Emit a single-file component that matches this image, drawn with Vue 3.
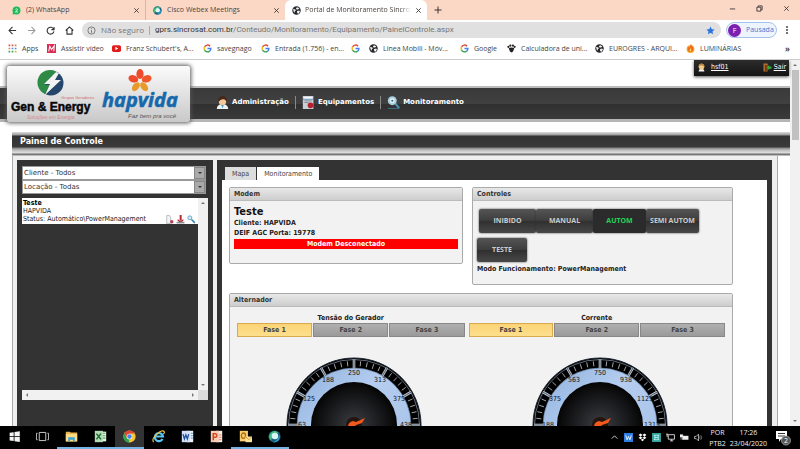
<script setup>
import { ref } from 'vue'

const browserTabs = [
  { title: '(2) WhatsApp', icon: 'i-whats', active: false },
  { title: 'Cisco Webex Meetings', icon: 'i-webex', active: false },
  { title: 'Portal de Monitoramento Sincros', icon: 'i-globe', active: true },
]

const bookmarks = [
  { title: 'Apps', icon: 'i-apps' },
  { title: 'Assistir vídeo', icon: 'i-m' },
  { title: "Franz Schubert's, A...", icon: 'i-yt' },
  { title: 'savegnago', icon: 'i-g' },
  { title: 'Entrada (1.756) - en...', icon: 'i-g' },
  { title: '', icon: 'i-g' },
  { title: 'Linea Mobili - Móv...', icon: 'i-globe' },
  { title: 'Google', icon: 'i-g' },
  { title: 'Calculadora de uni...', icon: 'i-paw' },
  { title: 'EUROGRES - ARQUI...', icon: 'i-globe' },
  { title: 'LUMINÁRIAS', icon: 'i-flame' },
]

const menu = [
  { title: 'Administração', icon: 'i-user' },
  { title: 'Equipamentos', icon: 'i-device' },
  { title: 'Monitoramento', icon: 'i-cam' },
]

const modes = ['INIBIDO', 'MANUAL', 'AUTOM', 'SEMI AUTOM', 'TESTE']
const mode = ref('AUTOM')

const gauges = ref([
  { title: 'Tensão do Gerador', labels: ['63', '125', '188', '250', '313', '375', '438'], phase: 1 },
  { title: 'Corrente', labels: ['188', '375', '563', '750', '938', '1125', '1313'], phase: 1 },
])

const apps = [
  { name: 'Iniciar', icon: 'i-win' },
  { name: 'Visão de tarefas', icon: 'i-task' },
  { name: 'Explorador', icon: 'i-folder', open: true },
  { name: 'Excel', icon: 'i-excel', open: true },
  { name: 'Chrome', icon: 'i-chrome', open: true, active: true },
  { name: 'Internet Explorer', icon: 'i-ie' },
  { name: 'Word', icon: 'i-word' },
  { name: 'PowerPoint', icon: 'i-ppt' },
  { name: 'Outlook', icon: 'i-outlook', open: true },
  { name: 'Webex', icon: 'i-webex', open: true },
]
const tray = ['i-up', 'i-tw', 'i-dropbox', 'i-teal', 'i-net', 'i-bat', 'i-vol']

function polar(angle, r) {
  const a = (angle * Math.PI) / 180
  return { x: 70 + r * Math.sin(a), y: 70 - r * Math.cos(a) }
}
const ticks = []
for (let i = -20; i <= 20; i++) {
  const major = i % 5 === 0
  const a = polar(i * 6, major ? 66 : 64)
  const b = polar(i * 6, major ? 57 : 59)
  ticks.push({ x1: a.x, y1: a.y, x2: b.x, y2: b.y, major })
}
</script>

<template>
  <div class="screen">
    <svg class="defs" aria-hidden="true">
      <defs>
        <linearGradient id="rim" x1="0" y1="0" x2="1" y2="1">
          <stop offset="0" stop-color="#8fb0dc" /><stop offset=".4" stop-color="#b4cdf0" /><stop offset="1" stop-color="#a5c0e6" />
        </linearGradient>
        <radialGradient id="dial" cx=".5" cy=".5" r=".5">
          <stop offset="0" stop-color="#3c3e42" /><stop offset=".45" stop-color="#232427" /><stop offset="1" stop-color="#050505" />
        </radialGradient>
        <symbol id="i-whats" viewBox="0 0 16 16"><circle cx="8" cy="8" r="7" fill="#1fba57" /><path d="M1 15l1-5 4 4z" fill="#1fba57" /><path d="M6 6q2-2 4 0 0 2-4 4.500h4.500" fill="none" stroke="#e6ffe9" stroke-width="1.500" /></symbol>
        <symbol id="i-webex" viewBox="0 0 16 16"><circle cx="8" cy="8" r="7.500" fill="#1d5d7c" /><path d="M2 11A7 7 0 0 1 13 3l-3 1Q5 6 4 13z" fill="#3fbf7b" /><circle cx="8.500" cy="7.500" r="4" fill="#d9f6f4" /><path d="M14 6a7 7 0 0 1-8 9q6-2 8-9z" fill="#28a8d8" /></symbol>
        <symbol id="i-globe" viewBox="0 0 16 16"><circle cx="8" cy="8" r="7.500" fill="#25272b" /><path d="M2 5l4 1 1 2-2 1v3L3 10zM9 2l4 2-2 2-3 0-1-2zM9 9l4-1 1 2-3 4-2-2z" fill="#f2f2f2" /></symbol>
        <symbol id="i-apps" viewBox="0 0 16 16"><path d="M1 1h3v3H1zM6.500 1h3v3h-3z" fill="#e25241" /><path d="M12 1h3v3h-3zM1 6.500h3v3H1z" fill="#d98a36" /><path d="M6.500 6.500h3v3h-3zM12 6.500h3v3h-3z" fill="#4c8fd8" /><path d="M1 12h3v3H1zM6.500 12h3v3h-3z" fill="#3aa757" /><path d="M12 12h3v3h-3z" fill="#e0b030" /></symbol>
        <symbol id="i-m" viewBox="0 0 16 16"><path d="M0 0h16v16H0z" fill="#dc2e55" /><path d="M3 13L5 4l3 6 5-7-1 10" fill="none" stroke="#fff" stroke-width="1.800" /></symbol>
        <symbol id="i-yt" viewBox="0 0 16 16"><rect y="2" width="16" height="12" rx="3" fill="#e21b1b" /><path d="M6 5l5 3-5 3z" fill="#fff" /></symbol>
        <symbol id="i-g" viewBox="0 0 16 16"><g fill="none" stroke-width="2.600"><path d="M12.500 3.800A6 6 0 0 0 2.800 5.200" stroke="#e24a3b" /><path d="M2.800 5.200a6 6 0 0 0 0 5.600" stroke="#f2b91c" /><path d="M2.800 10.800a6 6 0 0 0 9 1.900" stroke="#35a554" /><path d="M11.800 12.700A6 6 0 0 0 14 8H8" stroke="#4383ef" /></g></symbol>
        <symbol id="i-paw" viewBox="0 0 16 16"><path d="M3 7q5-2 10 0l-2 6q-3 4-6 0z" fill="#222" /><circle cx="2.500" cy="5" r="2" fill="#222" /><circle cx="6" cy="2.800" r="2" fill="#222" /><circle cx="10.500" cy="2.800" r="2" fill="#222" /><circle cx="13.500" cy="5" r="2" fill="#222" /></symbol>
        <symbol id="i-flame" viewBox="0 0 16 16"><circle cx="8" cy="9" r="7" fill="#f7a823" /><path d="M8 0q5 5 5 9a5 5 0 0 1-10 0q0-3 2-4l1 2q2-2 2-7z" fill="#ee6c1c" /><path d="M8 7q3 4 0 7-3-3 0-7z" fill="#ffe066" /></symbol>
        <symbol id="i-user" viewBox="0 0 16 16"><path d="M1 16q0-5 5-6h4q5 1 5 6z" fill="#eef2f5" /><path d="M6 10h4l-2 5z" fill="#4d9bc4" /><circle cx="8" cy="6.500" r="4.600" fill="#f7c799" /><path d="M3 8Q1 1 8 0q7 1 5 8-1-4-4-4-4 0-6 4z" fill="#45281a" /></symbol>
        <symbol id="i-gold" viewBox="0 0 16 16"><path d="M3 15q0-5 5-5t5 5z" fill="#f3f3f3" /><circle cx="8" cy="6.500" r="5" fill="#f0c987" /><path d="M2.500 7Q3 1 8 1t5.500 6Q11 4 8 4T2.500 7z" fill="#b98442" /></symbol>
        <symbol id="i-device" viewBox="0 0 16 16"><path d="M1 0h13v16H1z" fill="#c9cfd6" /><path d="M2 1h11v3H2z" fill="#f4f6f8" /><path d="M3 6h9M3 8h5" stroke="#78838e" /><path d="M1 4h13" stroke="#4a88b8" /><circle cx="10.500" cy="11.500" r="3.500" fill="#b7202c" /></symbol>
        <symbol id="i-cam" viewBox="0 0 16 16"><path d="M10 9l5 6" stroke="#4a94b0" stroke-width="2.500" /><path d="M1 15.300h14" stroke="#417d92" /><circle cx="6.500" cy="5.800" r="5.500" fill="#a7cfdf" /><circle cx="6.500" cy="5.800" r="3" fill="#e8f3f8" /><circle cx="6.500" cy="5.800" r="1.300" fill="#47616c" /></symbol>
        <symbol id="i-tool" viewBox="0 0 16 16"><path d="M6.500 0h3.500v10H6.500z" fill="#b3262e" /><path d="M3 7l5 4 5-4v3l-5 4-5-4z" fill="#b3262e" /><path d="M1 12h14v3H1z" fill="#8a8f96" /></symbol>
        <symbol id="i-page" viewBox="0 0 16 16"><path d="M3 1h5l2 3v11H3z" fill="#f5f5f5" stroke="#8d939a" /><circle cx="12" cy="12" r="3" fill="#b7404a" /></symbol>
        <symbol id="i-find" viewBox="0 0 16 16"><circle cx="5" cy="5" r="3.500" fill="#d9ebf5" stroke="#5a9cc4" stroke-width="1.500" /><path d="M8 8l6 6" stroke="#2f7fb5" stroke-width="2.600" /></symbol>
        <symbol id="i-exit" viewBox="0 0 16 16"><path d="M1 1h7v14H1z" fill="#c8813c" /><path d="M3 2l4 2v11l-4-1z" fill="#6f3d15" /><path d="M15 6H11V3L7 8l4 5v-3h4z" fill="#35ad3c" /></symbol>
        <symbol id="i-win" viewBox="0 0 16 16"><path d="M2 3.500l5-.8v5H2zM8 2.500l6.500-1v6.200H8zM2 8.600h5v5l-5-.8zM8 8.600h6.500v6.200L8 13.800z" fill="#f4f4f4" /></symbol>
        <symbol id="i-task" viewBox="0 0 16 16"><path d="M4 3h8v10H4zM2 4H.5v8H2M14 4h1.500v8H14" fill="none" stroke="#c8c8c8" stroke-width="1.200" /></symbol>
        <symbol id="i-folder" viewBox="0 0 16 16"><path d="M1 2h5l1 1h8v11H1z" fill="#e8b64b" /><path d="M1 5h14v9H1z" fill="#fbdc83" /><path d="M4 9h8v5H10v-2H6v2H4z" fill="#36a3dc" /></symbol>
        <symbol id="i-excel" viewBox="0 0 16 16"><path d="M7 2h8v12H7z" fill="#e7f3e7" /><path d="M11 4h3M11 7h3M11 10h3" stroke="#4ca25a" stroke-width="1.300" /><path d="M1 1h10v14H1z" fill="#b4dcb2" /><path d="M3 4.500l5.500 7M8.500 4.500l-5.500 7" stroke="#176a32" stroke-width="1.800" /></symbol>
        <symbol id="i-word" viewBox="0 0 16 16"><path d="M7 1h8v14H7z" fill="#f0f4fb" /><path d="M12 4h2.500M12 7h2.500M12 10h2.500" stroke="#5a84c8" stroke-width="1.200" /><path d="M1 1h10v14H1z" fill="#d2e1f7" /><path d="M2.500 5l1.700 6L6 6l1.800 5 1.700-6" fill="none" stroke="#1c4ea0" stroke-width="1.600" /></symbol>
        <symbol id="i-ppt" viewBox="0 0 16 16"><path d="M7 1h8v14H7z" fill="#fdf0ea" /><path d="M11 6h3M11 9h3M11 12h3" stroke="#e0774c" stroke-width="1.200" /><path d="M1 1h10v14H1z" fill="#f9cdb8" /><path d="M4 12.500V4.500h2.500q2 .3 2 2.200t-2 2.200H4" fill="none" stroke="#d2461a" stroke-width="1.800" /></symbol>
        <symbol id="i-outlook" viewBox="0 0 16 16"><path d="M1 1h10v13H1z" fill="#f8cf72" /><ellipse cx="5.500" cy="7" rx="2.500" ry="3.300" fill="none" stroke="#b26e07" stroke-width="1.600" /><path d="M8 8h8v7H8z" fill="#fbe39a" /><path d="M8 8l4 4 4-4" fill="none" stroke="#c98e22" /></symbol>
        <symbol id="i-chrome" viewBox="0 0 16 16"><circle cx="8" cy="8" r="7.500" fill="#f6c630" /><path d="M1.500 4.300A7.500 7.500 0 0 1 14.500 4.300H8L5 9.500z" fill="#df4436" /><path d="M1.500 4.300L5 10l3 2-1 3.500A7.500 7.500 0 0 1 1.500 4.300z" fill="#2fa14f" /><circle cx="8" cy="8" r="3.500" fill="#f3f3f3" /><circle cx="8" cy="8" r="2.700" fill="#4583ec" /></symbol>
        <symbol id="i-ie" viewBox="0 0 16 16"><path d="M13 11a5 5 0 1 1 .5-3H4.500" fill="none" stroke="#59c5f3" stroke-width="2.600" /><path d="M2 15Q-1 11 6 5t9-3q1 1-1 3" fill="none" stroke="#f2c438" stroke-width="1.400" /></symbol>
        <symbol id="i-up" viewBox="0 0 16 16"><path d="M3 10l5-5 5 5" fill="none" stroke="#ddd" stroke-width="1.600" /></symbol>
        <symbol id="i-tw" viewBox="0 0 16 16"><path d="M0 0h16v16H0z" fill="#2f7de0" /><path d="M3 4l2.500 8L8 6l2.500 6L13 4" fill="none" stroke="#fff" stroke-width="1.500" /></symbol>
        <symbol id="i-dropbox" viewBox="0 0 16 16"><path d="M4.500 1L8 3.500 4.500 6 1 3.500zM11.500 1L15 3.500 11.500 6 8 3.500zM4.500 6L8 8.500 4.500 11 1 8.500zM11.500 6L15 8.500 11.500 11 8 8.500zM8 10l3 2-3 2.500L5 12z" fill="#fff" /></symbol>
        <symbol id="i-teal" viewBox="0 0 16 16"><path d="M0 0h16v16H0z" fill="#2d9e9a" /><path d="M3 4h10M3 12h10M5 4v8M11 4v8M5 8h6" fill="none" stroke="#dff" stroke-width="1.300" /></symbol>
        <symbol id="i-net" viewBox="0 0 16 16"><path d="M4 3h11v8H4zM7 14h6M10 11v3M0 2h4M2 2v5" fill="none" stroke="#e8e8e8" stroke-width="1.500" /></symbol>
        <symbol id="i-bat" viewBox="0 0 16 16"><path d="M4 5h11v7H4z" fill="#eee" /><path d="M0 3h5v4H0zM2 7v5" fill="#eee" stroke="#eee" /></symbol>
        <symbol id="i-vol" viewBox="0 0 16 16"><path d="M1 6h3l4-4v12L4 10H1z" fill="none" stroke="#ddd" stroke-width="1.300" /><path d="M10 6q1 2 0 4M12 4q3 4 0 8" fill="none" stroke="#aaa" stroke-width="1.200" /></symbol>
      </defs>
    </svg>

    <!-- Browser chrome -->
    <header class="tabstrip">
      <div v-for="t in browserTabs" :key="t.title" class="btab" :class="{ on: t.active }">
        <svg class="ic"><use :href="'#' + t.icon" /></svg>
        <span class="btitle">{{ t.title }}</span>
        <button class="x" aria-label="Fechar guia"><svg viewBox="0 0 8 8"><path d="M1.500 1.500l5 5M6.500 1.500l-5 5" /></svg></button>
      </div>
      <button class="plus" aria-label="Nova guia"><svg viewBox="0 0 8 8"><path d="M4 .5v7M.5 4h7" /></svg></button>
      <div class="winctl">
        <button aria-label="Minimizar"><svg viewBox="0 0 8 8"><path d="M1 4.500h6" /></svg></button>
        <button aria-label="Restaurar"><svg viewBox="0 0 8 8"><path d="M1 2.500h4.500v4.500H1zM2.500 2.500V1H7v4.500H5.500" /></svg></button>
        <button aria-label="Fechar"><svg viewBox="0 0 8 8"><path d="M1.500 1.500l5 5M6.500 1.500l-5 5" /></svg></button>
      </div>
    </header>

    <div class="toolbar">
      <button aria-label="Voltar"><svg viewBox="0 0 10 10"><path d="M9 5H1.500M5 1L1.200 5 5 9" /></svg></button>
      <button class="dim" aria-label="Avançar"><svg viewBox="0 0 10 10"><path d="M1 5h7.500M5 1l3.800 4L5 9" /></svg></button>
      <button aria-label="Recarregar"><svg viewBox="0 0 10 10"><path d="M8.500 3.500A3.800 3.800 0 1 0 8.800 6M9 1v3H6" /></svg></button>
      <button aria-label="Início"><svg viewBox="0 0 10 10"><path d="M.8 5L5 1l4.200 4M2.200 4.500V9h5.600V4.500" /></svg></button>
      <div class="omni">
        <svg viewBox="0 0 10 10"><circle cx="5" cy="5" r="4" /><path d="M5 4.500v3M5 2.500v1" /></svg>
        <span class="sec">Não seguro</span>
        <span class="bar"></span>
        <span class="url"><b>gprs.sincrosat.com.br</b>/Conteudo/Monitoramento/Equipamento/PainelControle.aspx</span>
        <svg class="star" viewBox="0 0 10 10"><path d="M5 .5l1.400 3 3.200.3-2.400 2.200.7 3.300L5 7.600 2.100 9.300l.7-3.300L.4 3.800l3.200-.3z" /></svg>
      </div>
      <button class="profile"><span class="avatar">F</span>Pausada</button>
      <button class="dots" aria-label="Menu"><i></i><i></i><i></i></button>
    </div>

    <nav class="bookmarks">
      <a v-for="(b, i) in bookmarks" :key="i" href="#"><svg class="ic"><use :href="'#' + b.icon" /></svg>{{ b.title }}</a>
      <button class="more">»</button>
    </nav>

    <!-- Page -->
    <div class="viewport">
      <main class="page">
        <div class="top">
          <div class="session">
            <svg class="ic"><use href="#i-gold" /></svg><a href="#">hsf01</a>
            <a href="#" class="out"><svg class="ic"><use href="#i-exit" /></svg><u>Sair</u></a>
          </div>
          <div class="brand">
            <svg viewBox="0 0 183 55">
              <circle cx="44" cy="17" r="12.500" fill="#24476b" />
              <path d="M48 5A12.500 12.500 0 0 0 38 28L43 19H38L45 9l-1 6h4z" fill="#2f8a46" />
              <path d="M49 6L37 18h6l-5 11L54 14h-6l4-7z" fill="#f3f3f3" />
              <text x="54" y="33" font-family="Liberation Sans" font-size="4" fill="#d36a72">Grupos Geradores</text>
              <text x="4" y="45" font-family="Liberation Sans" font-size="12" font-weight="700" stroke="#080808" stroke-width=".5" fill="#080808">Gen &amp; Energy</text>
              <text x="20" y="53" font-family="Liberation Sans" font-size="5" fill="#d98a90">Soluções em Energia</text>
              <g transform="translate(133 15)">
                <ellipse cy="-7" rx="3.600" ry="5" fill="#ee4a2c" />
                <ellipse cy="-7" rx="3.600" ry="5" fill="#f0572b" transform="rotate(72)" />
                <ellipse cy="-7" rx="3.600" ry="5" fill="#ee4a2c" transform="rotate(-72)" />
                <ellipse cy="-7" rx="3.200" ry="5" fill="#e79a2a" transform="rotate(144)" />
                <ellipse cy="-7" rx="3.200" ry="5" fill="#e79a2a" transform="rotate(-144)" />
              </g>
              <text x="95" y="41" font-family="Open Sans" font-size="20" font-weight="700" font-style="italic" stroke="#1668ad" stroke-width=".5" fill="#1668ad">hapvida</text>
              <text x="121" y="52" font-family="Liberation Sans" font-size="6" font-style="italic" fill="#555">Faz bem pra você</text>
            </svg>
          </div>
          <nav class="menu">
            <a v-for="m in menu" :key="m.title" href="#"><svg><use :href="'#' + m.icon" /></svg>{{ m.title }}</a>
          </nav>
        </div>

        <h1 class="pagetitle">Painel de Controle</h1>

        <div class="body">
          <aside class="side">
            <label class="pick"><select aria-label="Cliente"><option>Cliente - Todos</option></select><span class="arr"></span></label>
            <label class="pick"><select aria-label="Locação"><option>Locação - Todas</option></select><span class="arr"></span></label>
            <div class="list">
              <div class="items">
                <div class="item">
                  <b>Teste</b>
                  <span>HAPVIDA</span>
                  <div class="status">
                    <span>Status: Automático\PowerManagement</span>
                    <span class="acts"><svg class="ic"><use href="#i-page" /></svg><svg class="ic"><use href="#i-tool" /></svg><svg class="ic"><use href="#i-find" /></svg></span>
                  </div>
                </div>
              </div>
              <div class="vbar"><i class="t up"></i><i class="t down"></i></div>
              <div class="hbar"><i class="t left"></i><i class="t right"></i></div>
              <div class="corner"></div>
            </div>
          </aside>

          <section class="work">
            <div class="tabs">
              <button>Mapa</button>
              <button class="on">Monitoramento</button>
            </div>
            <div class="sheet">
              <section class="box modem">
                <h2>Modem</h2>
                <div class="in">
                  <h3>Teste</h3>
                  <p>Cliente: HAPVIDA</p>
                  <p>DEIF AGC Porta: 19778</p>
                  <div class="alert">Modem Desconectado</div>
                </div>
              </section>
              <section class="box controls">
                <h2>Controles</h2>
                <div class="in">
                  <div class="modes">
                    <button v-for="m in modes" :key="m" :class="{ on: m === mode }" @click="mode = m">{{ m }}</button>
                  </div>
                  <p>Modo Funcionamento: PowerManagement</p>
                </div>
              </section>
              <section class="box alt">
                <h2>Alternador</h2>
                <div class="gauges">
                  <div v-for="g in gauges" :key="g.title" class="gauge">
                    <h4>{{ g.title }}</h4>
                    <div class="phases">
                      <button v-for="n in 3" :key="n" :class="{ on: g.phase === n }" @click="g.phase = n">Fase {{ n }}</button>
                    </div>
                    <svg class="meter" viewBox="0 0 140 140">
                      <circle cx="70" cy="70" r="67" fill="#000" stroke="#1b2530" />
                      <circle cx="70" cy="70" r="65.500" fill="none" stroke="#8d9aab" stroke-width=".7" />
                      <circle cx="70" cy="70" r="57" fill="url(#rim)" stroke="#5d7593" stroke-width=".6" />
                      <template v-for="(t, i) in ticks" :key="i">
                        <line v-if="t.major" :x1="t.x1" :y1="t.y1" :x2="t.x2" :y2="t.y2" stroke="#b9c4d2" stroke-width="2.600" />
                        <line :x1="t.x1" :y1="t.y1" :x2="t.x2" :y2="t.y2" :stroke="t.major ? '#3a4149' : '#c9ced6'" stroke-width=".8" />
                      </template>
                      <circle cx="70" cy="70" r="43" fill="url(#dial)" />
                      <text v-for="(l, i) in g.labels" :key="l" :x="polar((i - 3) * 30, 52).x" :y="polar((i - 3) * 30, 52).y + 2" text-anchor="middle" class="num">{{ l }}</text>
                      <circle cx="70" cy="70" r="8" fill="#24150f" />
                      <path d="M64 72q0-5 5-6l3 1 9-4-3 5-6 2-3 4z" fill="#f4581c" />
                    </svg>
                  </div>
                </div>
              </section>
            </div>
          </section>
        </div>
      </main>
      <div class="scroll"><i class="t up"></i><div class="thumb"></div><i class="t down"></i></div>
    </div>

    <!-- Taskbar -->
    <footer class="taskbar">
      <button v-for="a in apps" :key="a.name" :aria-label="a.name" :class="{ open: a.open, active: a.active }"><svg><use :href="'#' + a.icon" /></svg></button>
      <div class="tray">
        <svg v-for="t in tray" :key="t"><use :href="'#' + t" /></svg>
      </div>
      <div class="lang">POR<br />PTB2</div>
      <div class="clock">17:26<br />23/04/2020</div>
      <svg class="note" viewBox="0 0 16 16"><path d="M1 1h11v8H6l-2 3V9H1z" fill="#fff" /><path d="M3 3.500h7M3 6h7" stroke="#333" /><circle cx="11" cy="10.500" r="4.500" fill="#555" stroke="#aaa" stroke-width=".8" /><text x="11" y="13" text-anchor="middle" font-family="Open Sans" font-size="7" fill="#fff">2</text></svg>
    </footer>
  </div>
</template>

<style>
body { background: #fff; }
</style>

<style scoped>
* { box-sizing: border-box; }
.screen {
  height: 100vh; display: flex; flex-direction: column; overflow: hidden;
  font-family: "DejaVu Sans Condensed", "DejaVu Sans", sans-serif; font-size: 7px; line-height: 8px; color: #222;
}
.defs { position: absolute; width: 0; height: 0; }
button { border: 0; padding: 0; margin: 0; background: none; font: inherit; color: inherit; }
a { color: inherit; }
h1, h2, h3, h4, p { margin: 0; }
svg { display: block; flex: none; }
.ic { width: 9px; height: 9px; }

.tabstrip { height: 20px; flex: none; display: flex; background: #fbd8c6; font-family: "Open Sans", sans-serif; color: #4a4441; }
.btab { width: 142px; padding: 0 5px 0 12px; display: flex; align-items: center; gap: 5px; }
.btab:nth-child(2) { border-left: 1px solid #d9b5a4; padding-left: 7px; }
.btab:nth-child(1) { width: 145px; }
.btab:nth-child(2) { width: 140px; }
.btab.on { background: #fff; border-radius: 6px 6px 0 0; padding-left: 7px; gap: 4px; }
.btitle { flex: 1; min-width: 0; white-space: nowrap; overflow: hidden; }
.on .btitle { mask-image: linear-gradient(90deg, #000 90%, transparent); }
.x, .plus, .winctl button { display: flex; align-items: center; justify-content: center; }
.x svg { width: 7px; height: 7px; }
.tabstrip path { fill: none; stroke: #3a3533; stroke-width: 1; }
.plus { width: 22px; }
.plus svg { width: 8px; height: 8px; }
.winctl { margin-left: auto; display: flex; height: 16px; }
.winctl button { width: 27px; }
.winctl svg { width: 7px; height: 7px; }

.toolbar { height: 20px; flex: none; display: flex; align-items: center; padding: 0 4px 0 8px; background: #fff; font-family: "Open Sans", sans-serif; }
.toolbar > button:not(.profile) { width: 19px; }
.toolbar button > svg, .omni svg { width: 9px; height: 9px; fill: none; stroke: #333; stroke-width: 1.2; }
.toolbar .dim svg { stroke: #999; }
.omni { flex: 1; height: 16px; border-radius: 8px; background: #e0e0e0; display: flex; align-items: center; gap: 5px; padding: 0 6px 0 5px; margin: 0 5px 0 -2px; font-size: 8px; color: #777; }
.omni svg { stroke: #666; stroke-width: .9; }
.omni b { font-weight: 400; color: #333; }
.bar { width: 1px; height: 9px; background: #aaa; }
.url { flex: 1; white-space: nowrap; font-family: Roboto, sans-serif; }
.omni .star { fill: #2a73dd; stroke: none; }
.profile { display: flex; align-items: center; gap: 5px; width: 51px; height: 16px; border: 1px solid #a8c2ec; border-radius: 8px; background: #eef4fe; color: #3f78cf; padding-left: 1px; }
.avatar { width: 13px; height: 13px; line-height: 13px; border-radius: 50%; background: #7a1fb0; color: #fff; text-align: center; }
.toolbar > .dots { display: flex; flex-direction: column; align-items: center; gap: 1px; }
.dots i { width: 2px; height: 2px; background: #444; border-radius: 50%; }

.bookmarks { height: 20px; flex: none; display: grid; grid-template-columns: 39px 65px 91px 58px 90px 18px 91px 47px 88px 91px 1fr auto; align-items: center; padding: 0 10px 2px 8px; background: #fff; border-bottom: 1px solid #ccc; font-family: "Open Sans", sans-serif; color: #444; white-space: nowrap; }
.bookmarks a { display: flex; align-items: center; gap: 5px; text-decoration: none; }
.more { font-weight: 700; font-size: 8px; }

.viewport { flex: 1; min-height: 0; display: flex; overflow: hidden; }
.page { flex: 1; min-width: 0; }
.top { position: relative; height: 72px; padding-top: 26px; }
.session { position: absolute; top: 0; right: 1px; width: 95px; height: 16px; display: flex; align-items: center; gap: 5px; padding: 0 3px 2px 3px; background: linear-gradient(#2c2c2c, #151515); color: #fff; box-shadow: 0 1px 3px #555; }
.out { margin-left: auto; display: flex; align-items: center; gap: 2px; }
.brand { position: absolute; top: 6px; left: 7px; width: 183px; height: 56px; border-radius: 3px; background: linear-gradient(#fbfbfb, #c9c9c9); box-shadow: 0 0 4px 1px #555; }
.menu { height: 36px; display: flex; align-items: center; padding: 0 0 3px 216px; border-top: 2px solid #bbb; border-bottom: 3px solid #b5b5b5; background: linear-gradient(#3a3a3a, #404040 50%, #303030 52%, #3a3a3a); }
.menu a { display: flex; align-items: center; gap: 3px; color: #fff; font-weight: 700; text-decoration: none; font-family: "DejaVu Sans", sans-serif; }
.menu a + a { margin-left: 6px; padding-left: 6px; border-left: 1px solid #888; }
.menu svg { width: 13px; height: 13px; }

.pagetitle { margin-left: 12px; height: 24px; padding: 3px 8px 0; font: 700 8px/13px "DejaVu Sans", sans-serif; color: #fff;
  background: linear-gradient(#ddd 0, #999 3px, #333 4px, #3a3a3a 15px, #888 16px, #bbb 18px, #e2e2e2 21px, #666 22px, #888 23px, #eee 24px); }
.body { display: flex; gap: 4px; margin: 0 12px; padding: 4px 5px 0 4px; border: 1px solid #aaa; border-width: 0 1px; background: #efefef; }
.side { width: 196px; flex: none; background: #333; padding: 6px 5px 26px; }
.pick { display: flex; height: 14px; width: 184px; border: 1px solid #999; background: #fff; }
.pick select { flex: 1; appearance: none; border: 0; background: none; padding: 0 1px; font: inherit; font-family: "DejaVu Sans", sans-serif; color: #333; outline: 0; }
.arr { width: 11px; background: #aaa; display: flex; align-items: center; justify-content: center; border: 1px solid #888; }
.arr::after { content: ""; border: 2px solid transparent; border-top-color: #333; border-bottom: 0; }
.list { margin-top: 4px; display: grid; grid-template-columns: 1fr 10px; grid-template-rows: 192px 10px; }
.item { display: flex; flex-direction: column; background: #fff; padding: 1px 1px 0; }
.item b { color: #000; }
.status { display: flex; justify-content: space-between; }
.acts { display: flex; gap: 2px; padding-right: 1px; }
.vbar, .scroll { background: #f1f1f1; display: flex; flex-direction: column; align-items: center; justify-content: space-between; padding: 4px 0; }
.hbar { background: #f1f1f1; display: flex; align-items: center; justify-content: space-between; padding: 0 4px; }
.corner { background: #dcdcdc; }
.t { border: 2px solid transparent; }
.up { border-bottom-color: #777; border-top: 0; }
.down { border-top-color: #777; border-bottom: 0; }
.left { border-right-color: #777; border-left: 0; }
.right { border-left-color: #777; border-right: 0; }

.work { flex: 1; background: #333; padding: 7px 5px 0; }
.tabs { display: flex; gap: 1px; padding-left: 3px; }
.tabs button { height: 13px; padding: 0 7px; background: #ddd; color: #444; }
.tabs .on { background: #fff; }
.sheet { background: #fff; padding: 7px 34px 0 7px; display: grid; grid-template-columns: 234fr 261fr; gap: 8px 9px; align-items: start; }
.box { border: 1px solid #aaa; border-radius: 2px; background: #f2f2f2; font-weight: 700; }
.box h2 { font-size: 7px; line-height: 12px; height: 13px; padding: 0 4px; background: linear-gradient(#e8e8e8, #cdcdcd); border-bottom: 1px solid #bbb; color: #333; }
.in { padding: 5px 4px; }
.modem { min-height: 77px; }
.modem h3 { font-size: 11px; line-height: 12px; color: #111; }
.modem p { line-height: 10px; }
.alert { background: #f00; color: #fff; text-align: center; line-height: 10px; margin-top: 1px; }
.controls { min-height: 98px; }
.modes { display: flex; flex-wrap: wrap; gap: 5px 0; padding-top: 3px; }
.modes button { height: 24px; background: linear-gradient(#555, #3c3c3c 50%, #303030 52%, #484848); color: #ccc; font: 700 7px/24px "Open Sans", sans-serif; width: 57px; border-radius: 2px; box-shadow: 0 0 2px #333; }
.modes button:nth-child(1) { margin-left: 2px; }
.modes button:nth-child(3), .modes button:nth-child(4) { width: 53px; }
.modes button:nth-child(5) { width: 50px; }
.modes .on { background: #2b2b2b; color: #1fd655; }
.controls p { padding-top: 3px; }
.alt { grid-column: 1 / -1; }
.gauges { display: grid; grid-template-columns: 228fr 257fr; gap: 4px; padding: 6px 7px; }
.gauge h4 { font-size: 7px; line-height: 10px; text-align: center; }
.phases { display: grid; grid-template-columns: repeat(3, 1fr); gap: 1px; }
.phases button { height: 14px; border: 1px solid #888; background: linear-gradient(#b0b0b0, #9a9a9a); color: #444; }
.phases .on { background: linear-gradient(#fbd476, #fddf8c); border-color: #d8a94e; }
.meter { width: 146px; height: 140px; padding-left: 6px; margin: 18px auto 0; }
.num { font-size: 7px; font-weight: 400; fill: #111; }

.scroll { width: 10px; justify-content: flex-start; }
.scroll .thumb { width: 7px; height: 70px; background: #c1c1c1; margin-top: 4px; }
.scroll .down { margin-top: auto; }

.taskbar { height: 23px; flex: none; display: flex; align-items: center; background: #000; color: #eee; font-family: "Open Sans", sans-serif; padding-right: 9px; }
.taskbar button { width: 29px; height: 23px; display: flex; align-items: center; justify-content: center; border-bottom: 2px solid transparent; }
.taskbar button:first-child { width: 28px; }
.taskbar button svg { width: 13px; height: 13px; }
.taskbar .open { border-color: #75b5e6; }
.taskbar .active { background: #333; }
.tray { margin-left: auto; display: flex; gap: 5px; }
.tray svg { width: 9px; height: 9px; }
.lang, .clock { line-height: 11px; text-align: center; }
.lang { margin-left: 6px; }
.clock { margin: 0 8px 0 4px; }
.note { width: 16px; height: 16px; }
</style>
